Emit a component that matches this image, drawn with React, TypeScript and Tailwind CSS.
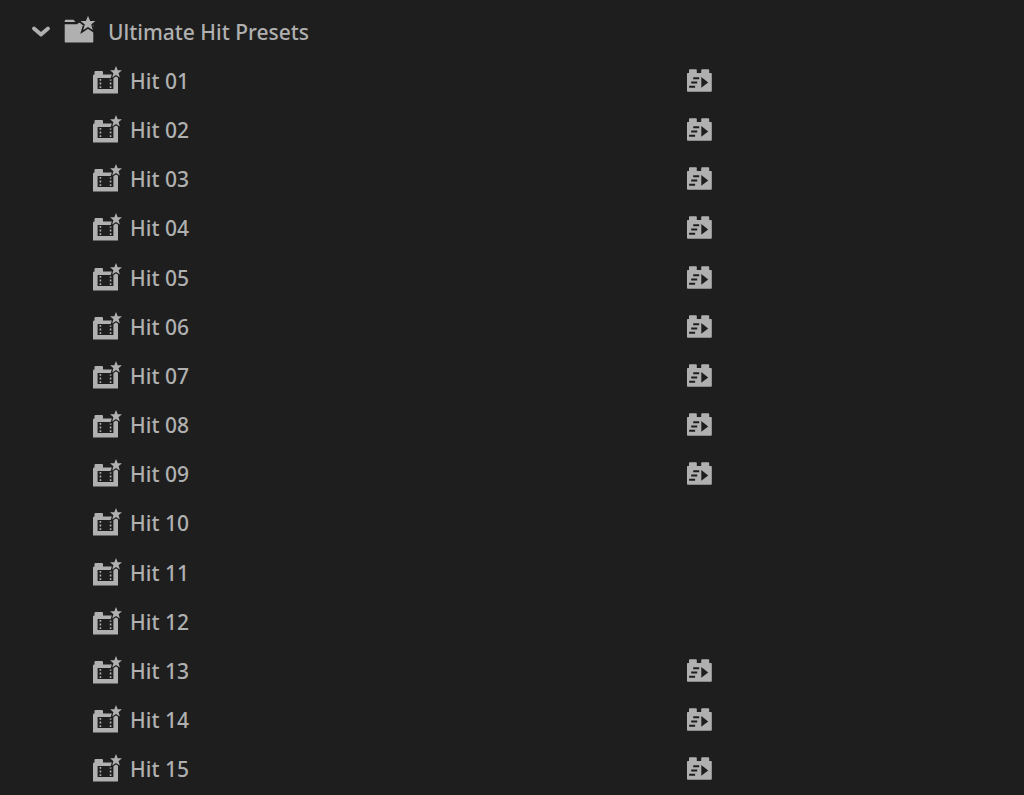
import React from 'react';

interface Preset {
  name: string;
  accelerated: boolean;
}

const presets: Preset[] = [
  { name: 'Hit 01', accelerated: true },
  { name: 'Hit 02', accelerated: true },
  { name: 'Hit 03', accelerated: true },
  { name: 'Hit 04', accelerated: true },
  { name: 'Hit 05', accelerated: true },
  { name: 'Hit 06', accelerated: true },
  { name: 'Hit 07', accelerated: true },
  { name: 'Hit 08', accelerated: true },
  { name: 'Hit 09', accelerated: true },
  { name: 'Hit 10', accelerated: false },
  { name: 'Hit 11', accelerated: false },
  { name: 'Hit 12', accelerated: false },
  { name: 'Hit 13', accelerated: true },
  { name: 'Hit 14', accelerated: true },
  { name: 'Hit 15', accelerated: true },
];

const STAR = 'M0 -7.6 L2.1 -2.3 L7.4 -2.3 L3.2 1.2 L4.8 6.6 L0 3.5 L-4.8 6.6 L-3.2 1.2 L-7.4 -2.3 L-2.1 -2.3 Z';

function ChevronIcon() {
  return (
    <svg className="w-5 h-5 shrink-0" viewBox="0 0 20 20" fill="none" aria-hidden="true">
      <path d="M3 6.5 L10 12.5 L17 6.5" stroke="currentColor" strokeWidth="3.8" strokeLinecap="round" strokeLinejoin="round" />
    </svg>
  );
}

function FolderIcon() {
  return (
    <svg className="w-8 h-8 shrink-0" viewBox="0 0 32 32" fill="currentColor" aria-hidden="true">
      <path d="M0.7 5.2 Q0.7 3.8 2 3.8 H9.5 L11.5 6 H0.7 Z" />
      <path d="M0.7 8.2 H13 L15 6.8 H29.3 V25.4 Q29.3 26.6 28.1 26.6 H1.9 Q0.7 26.6 0.7 25.4 Z" />
      <path d={STAR} transform="translate(24 7.4)" stroke="#1e1e1e" strokeWidth="3.4" />
      <path d={STAR} transform="translate(24 7.4)" />
    </svg>
  );
}

function PresetIcon() {
  return (
    <svg className="w-8 h-8 shrink-0" viewBox="0 0 32 32" fill="currentColor" aria-hidden="true">
      <path
        fillRule="evenodd"
        d="M1 10.8 Q1 9.5 2.5 9.5 V7.1 Q2.5 6.1 3.5 6.1 H10 Q11 6.1 11 7.1 V9.5 H26 V28.5 H1 Z M5.6 13 V24 H21.4 V13 Z"
      />
      <path d="M7.6 14 h1.6 v1.8 h-1.6 z M7.6 17.6 h1.6 v1.8 h-1.6 z M7.6 21.2 h1.6 v1.8 h-1.6 z" />
      <path d="M17.8 14 h1.6 v1.8 h-1.6 z M17.8 17.6 h1.6 v1.8 h-1.6 z M17.8 21.2 h1.6 v1.8 h-1.6 z" />
      <path d={STAR} transform="translate(24 7.2) scale(0.8)" stroke="#1e1e1e" strokeWidth="3" />
      <path d={STAR} transform="translate(24 7.2) scale(0.8)" />
    </svg>
  );
}

function AcceleratedIcon() {
  return (
    <svg className="w-[26px] h-6" viewBox="0 0 26 24" fill="currentColor" role="img" aria-label="Accelerated">
      <path d="M1 4.6 Q1 3.9 1.7 3.9 H3 V1 Q3 0.2 3.8 0.2 H10 Q10.8 0.2 10.8 1 V3.9 H15.2 V1 Q15.2 0.2 16 0.2 H22.4 Q23.2 0.2 23.2 1 V3.9 H25 Q25.8 3.9 25.8 4.6 V22 Q25.8 22.8 25 22.8 H1.8 Q1 22.8 1 22 Z" />
      <path d="M7.2 8.2 H13.2 V10.2 H7.2 Z M5.2 12.5 H11.2 V14.5 H5.2 Z M3.1 16.7 H9.1 V18.7 H3.1 Z M15.3 8 L22.2 13.4 L15.3 18.8 Z" fill="#1e1e1e" />
    </svg>
  );
}

export default function App() {
  return (
    <main className="w-full min-h-screen flex flex-col pt-[7px] pb-px bg-[#1e1e1e] text-[#b0b0b0] font-['Noto_Sans',sans-serif] text-[21px] leading-7 font-medium">
      {/* Bin header */}
      <button type="button" aria-expanded="true" className="flex-1 flex items-center pl-[31px] text-left">
        <ChevronIcon />
        <span className="flex items-center gap-3 pl-[13px]">
          <FolderIcon />
          Ultimate Hit Presets
        </span>
      </button>

      {/* Presets */}
      {presets.map((preset) => (
        <div key={preset.name} className="flex-1 flex items-center pl-[92px]">
          <div className="w-[594px] shrink-0 flex items-center gap-1.5">
            <PresetIcon />
            <span>{preset.name}</span>
          </div>
          {preset.accelerated && <AcceleratedIcon />}
        </div>
      ))}
    </main>
  );
}
